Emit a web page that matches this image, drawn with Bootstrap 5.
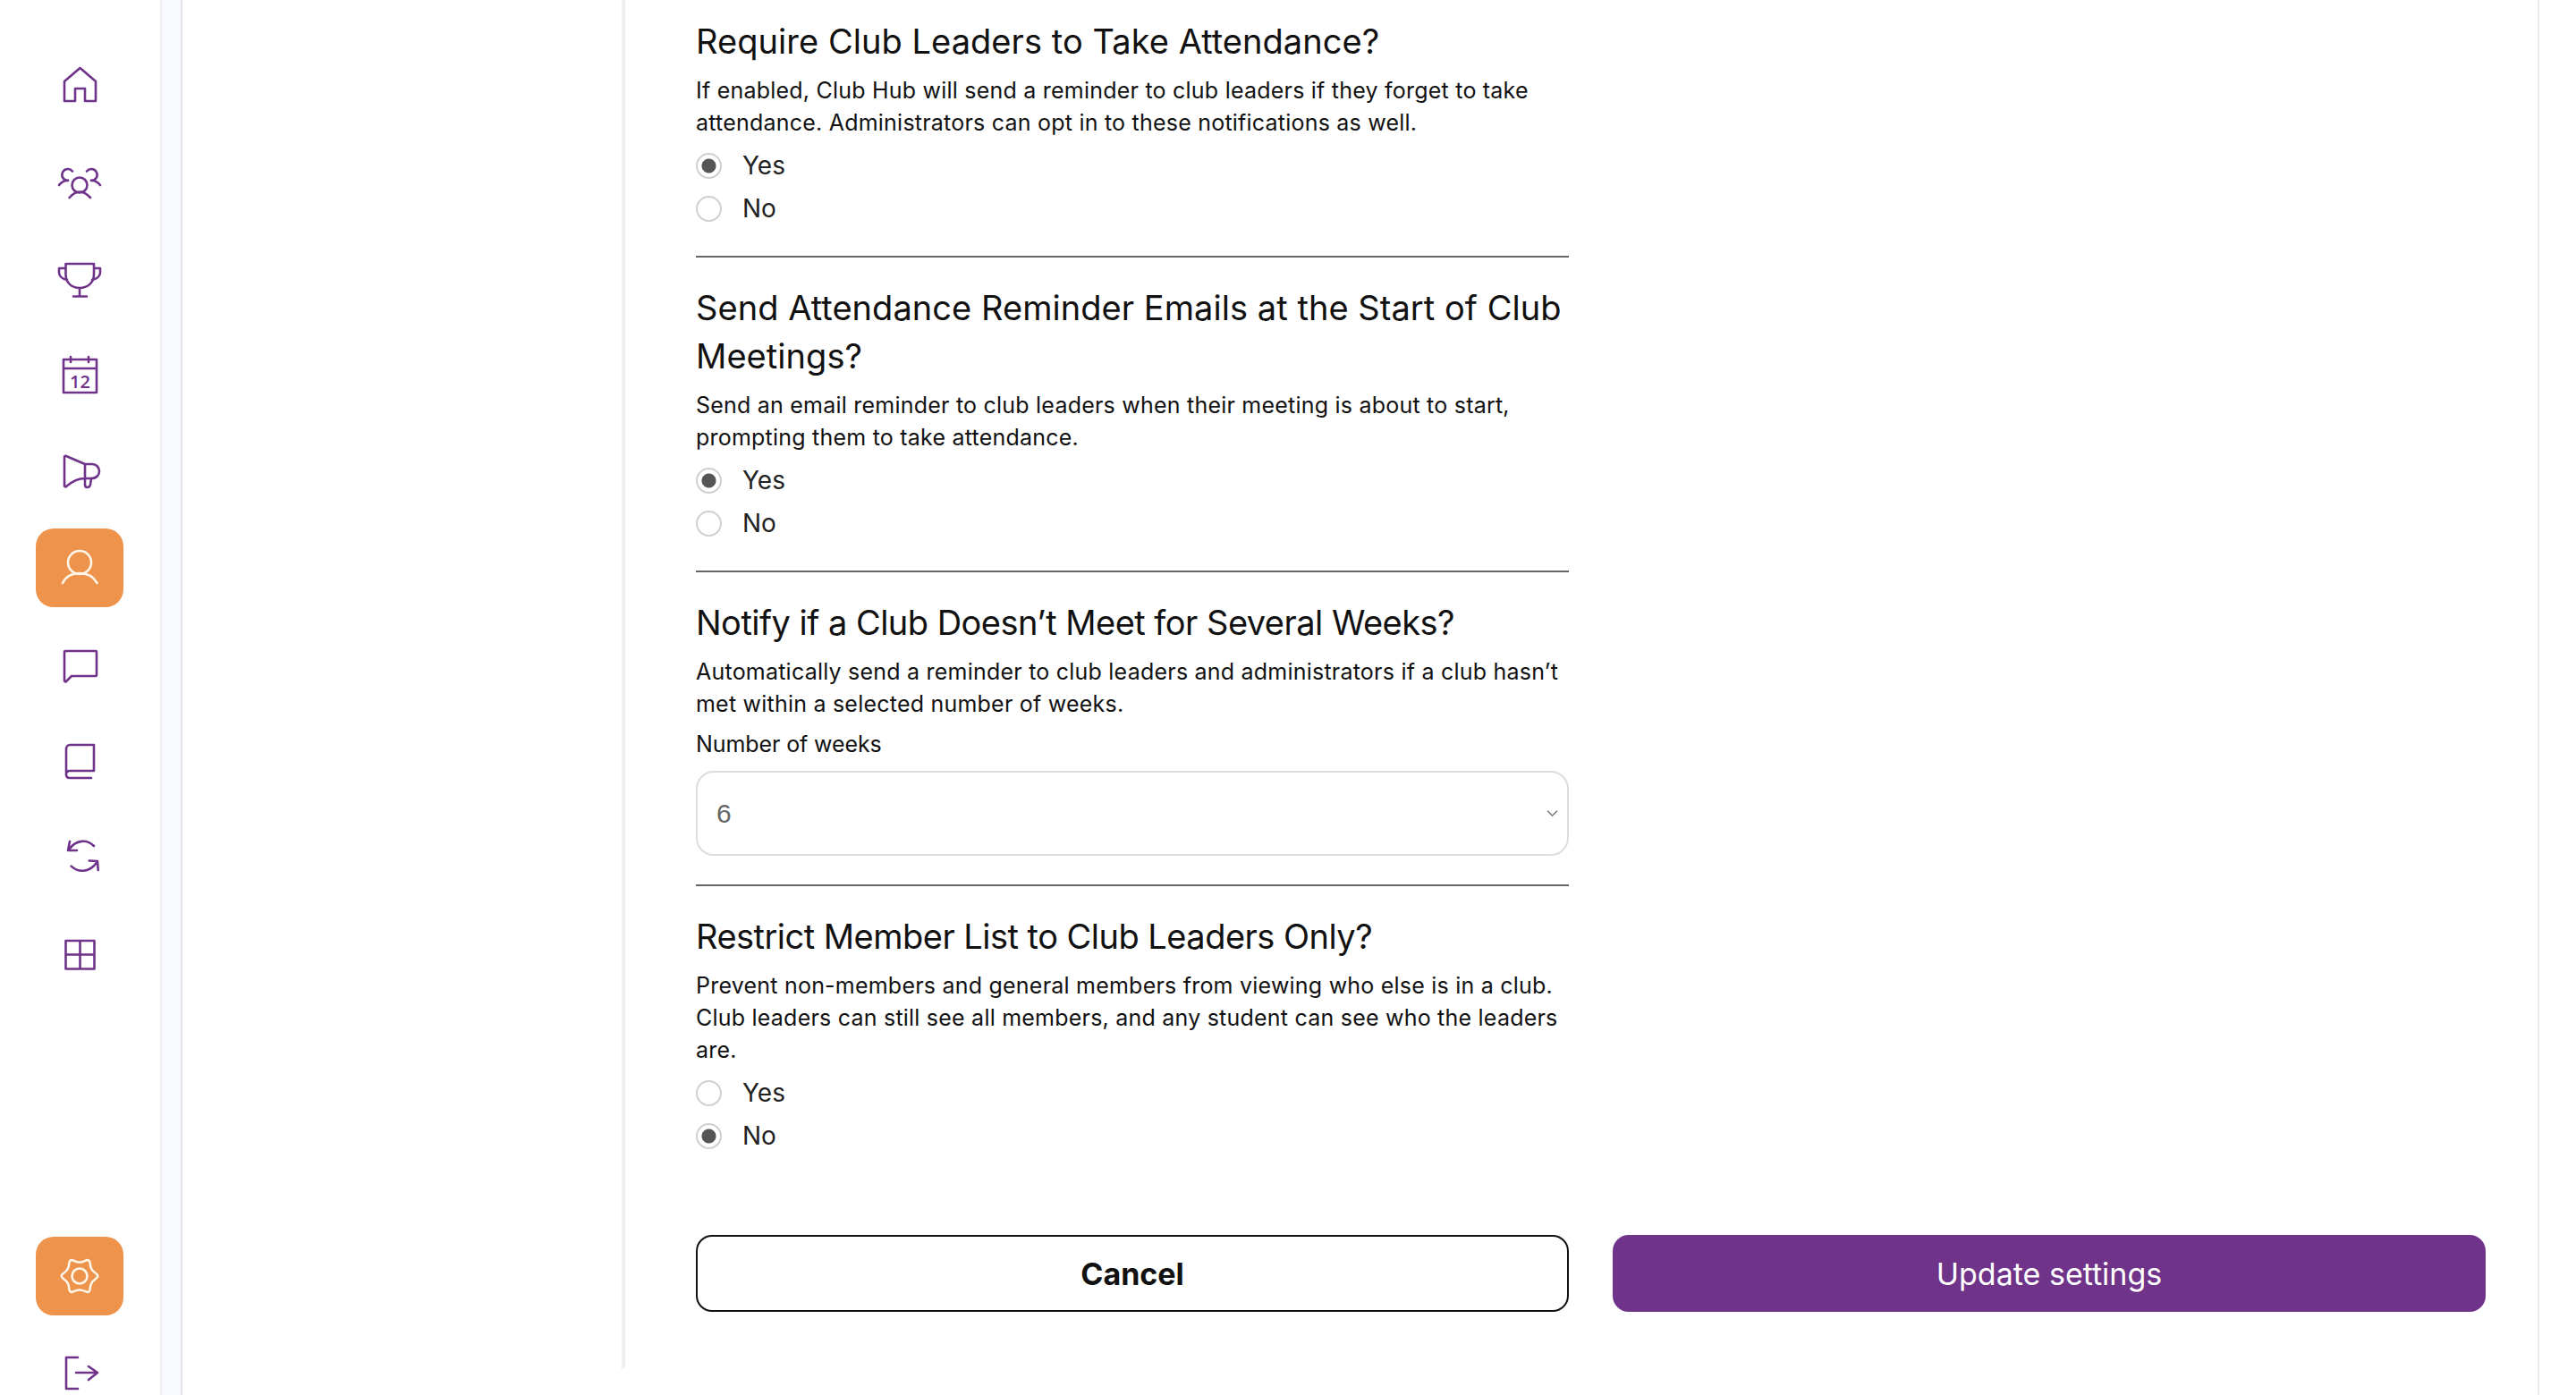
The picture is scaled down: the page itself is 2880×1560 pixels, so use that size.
<!DOCTYPE html>
<html lang="en">
<head>
    <meta charset="UTF-8">
    <meta name="viewport" content="width=device-width, initial-scale=1.0">
    <title>Club Hub settings</title>
    <link href="https://cdn.jsdelivr.net/npm/bootstrap@5.3.0/dist/css/bootstrap.min.css" rel="stylesheet">
    <style>
        html, body { height: 100%; overflow: hidden; background: #fff; }
        body { font-family: Inter, "Noto Sans", sans-serif; color: #111; }
        .app-shell { height: 1560px; }
        .side-rail { width: 179px; padding-top: 51px; overflow: hidden; }
        .rail-item { width: 98px; height: 88px; margin: 0 0 20px 40px; border-radius: 20px; }
        .rail-item svg { width: 56px; height: 44px; fill: none; stroke: #6f338a; stroke-width: 2.6; stroke-linecap: round; stroke-linejoin: round; }
        .rail-item text { fill: #6f338a; stroke: none; font-family: "Open Sans", sans-serif; font-size: 20px; font-weight: 600; }
        .rail-item.is-active { background: #ee934b; }
        .rail-item.is-active svg { stroke: #fff6ea; }
        .rail-bottom { margin-top: 272px; }
        .rail-bottom .rail-item { margin-bottom: 19px; }
        .rail-strip { width: 25px; background: #f9faff; border-left: 2px solid #eef0f6; border-right: 2px solid #dfe1e8; }
        .sub-panel { width: 495px; height: 1530px; border-right: 4px solid #f0f0f0; }
        .page-main { width: 2140px; padding: 19px 60px 0 79px; border-right: 2px solid #eee; }
        .form-col { width: 976px; }
        .set-title { font-size: 38px; line-height: 54px; font-weight: 400; letter-spacing: .05px; margin: 0 0 10px; white-space: nowrap; }
        .set-title-tight { letter-spacing: -.52px; }
        .set-help { font-size: 25px; line-height: 36px; letter-spacing: .22px; margin: 0; white-space: nowrap; }
        .set-radios { margin-top: 6px; }
        .set-radio { display: flex; align-items: center; height: 48px; margin: 0; padding: 0; }
        .set-radio .form-check-input { width: 29px; height: 29px; margin: 0 23px 0 0; border: 2px solid #d0d0d0; float: none; }
        .set-radio .form-check-input:checked { background-color: #fff; background-image: radial-gradient(circle, #555 0 7.5px, transparent 8.5px); border-color: #d0d0d0; }
        .set-radio .form-check-label { font-size: 28px; color: #222; }
        .set-rule { height: 2px; background: #666; border: 0; opacity: 1; margin: 29px 0 29px; }
        .set-label { font-size: 25px; line-height: 36px; letter-spacing: -.1px; margin: 9px 0 12px; display: block; }
        .set-select { height: 95px; border: 2px solid #ddd; border-radius: 20px; padding-left: 21px; font-family: "Liberation Sans", sans-serif; font-size: 30px; color: #666;
            background-image: url("data:image/svg+xml,%3csvg xmlns='http://www.w3.org/2000/svg' viewBox='0 0 12 8'%3e%3cpath fill='none' stroke='%23777' stroke-width='1.4' d='M1 1.500l5 5 5-5'/%3e%3c/svg%3e");
            background-size: 13px 9px; background-position: right 10px center; }
        .set-select + .set-rule { margin-top: 32px; }
        .form-actions { gap: 49px; margin-top: 87px; }
        .act-btn { width: 976px; height: 86px; border-radius: 18px; font-size: 34px; }
        .act-cancel { border: 2px solid #111; background: #fff; color: #111; font-weight: 700; }
        .act-save { border: 2px solid #6f338a; background: #6f338a; color: #fff; font-weight: 400; }
    </style>
</head>
<body>
    <div class="app-shell d-flex">
        <nav class="side-rail flex-shrink-0">
            <div class="rail-item d-flex align-items-center justify-content-center">
                <svg viewBox="0 0 56 44"><path d="M11 40V18L28.500 3 46 18V40H34V26H23V40Z"/></svg>
            </div>
            <div class="rail-item d-flex align-items-center justify-content-center">
                <svg viewBox="0 -1 56 44"><circle cx="28" cy="25" r="8.500"/><path d="M16.600 39Q28 26 40 39M20 9.500A6.500 6.500 0 1 0 15 20M5 25Q9 20 15 19.500M36 9.500A6.500 6.500 0 1 1 41 20M51 25Q47 20 41 19.500"/></svg>
            </div>
            <div class="rail-item d-flex align-items-center justify-content-center">
                <svg viewBox="0 -1 56 44"><path d="M12.500 5H44V17C44 26 37 32 28 32S12.500 26 12.500 17ZM28 32V41M21 41.500H36M12.500 10H5V15C5 19 9 22 14 23M44 10H51V15C51 19 47 22 42 23"/></svg>
            </div>
            <div class="rail-item d-flex align-items-center justify-content-center">
                <svg viewBox="0 0 56 44"><path d="M10 5H47V42H10ZM10 15H47M18 2V8M38 2V8"/><text x="28.500" y="37" text-anchor="middle">12</text></svg>
            </div>
            <div class="rail-item d-flex align-items-center justify-content-center">
                <svg viewBox="0 0 56 44"><path d="M11 6C11 5 12 4.500 13 5L34 14H42C47 14 50 18 50 22C50 26 47 30 41 30H34C27 30 20 33 13 39C12 40 11 39 11 38ZM34 14V37C34 41 39 41 40 37L41 30"/></svg>
            </div>
            <div class="rail-item is-active d-flex align-items-center justify-content-center">
                <svg viewBox="0 0 56 44"><circle cx="28" cy="16" r="13"/><path d="M9 39C13 31 20 28 28 28S43 31 47.500 39"/></svg>
            </div>
            <div class="rail-item d-flex align-items-center justify-content-center">
                <svg viewBox="0 -1 56 44"><path d="M11 7A1 1 0 0 1 12 6H46A1 1 0 0 1 47 7V33A1 1 0 0 1 46 34H19L13 40C12 41 11 40 11 39Z"/></svg>
            </div>
            <div class="rail-item d-flex align-items-center justify-content-center">
                <svg viewBox="0 0 56 44"><path d="M13 38V9C13 6 15 4 17 4H44V33H17C14 33 13 35 13 37S14 41 17 41H41"/></svg>
            </div>
            <div class="rail-item d-flex align-items-center justify-content-center">
                <svg viewBox="0 1 56 44"><path d="M44 10C36 2 24 3 16 14M17 5L15 15L25 15M18.600 32.600C28 41 40 39 47.500 28M38.700 26.500L48 27L48.700 37"/></svg>
            </div>
            <div class="rail-item d-flex align-items-center justify-content-center">
                <svg viewBox="0 1 56 44"><path d="M12.500 8H44.500V39.500H12.500ZM28.500 8V39.500M12.500 23.500H44.500"/></svg>
            </div>
            <div class="rail-bottom">
                <div class="rail-item is-active d-flex align-items-center justify-content-center">
                    <svg viewBox="0 0 56 44"><g transform="translate(28 22)"><path d="M17.560 -3.500Q23 0 17.560 3.500Q12.120 7 11.810 13.460Q11.500 19.920 5.750 16.960Q0 14 -5.750 16.960Q-11.500 19.920 -11.810 13.460Q-12.120 7 -17.560 3.500Q-23 0 -17.560 -3.500Q-12.120 -7 -11.810 -13.460Q-11.500 -19.920 -5.750 -16.960Q0 -14 5.750 -16.960Q11.500 -19.920 11.810 -13.460Q12.120 -7 17.560 -3.500Z"/><circle r="8.500"/></g></svg>
                </div>
                <div class="rail-item d-flex align-items-center justify-content-center">
                    <svg viewBox="0 0 56 44"><path d="M26 6H13V41H26M24 23H48M38 16L48 23L38 31"/></svg>
                </div>
            </div>
        </nav>
        <div class="rail-strip flex-shrink-0"></div>
        <aside class="sub-panel flex-shrink-0"></aside>
        <main class="page-main flex-shrink-0">
            <div class="form-col">
                <h5 class="set-title">Require Club Leaders to Take Attendance?</h5>
                <p class="set-help">If enabled, Club Hub will send a reminder to club leaders if they forget to take<br>attendance. Administrators can opt in to these notifications as well.</p>
                <div class="set-radios">
                    <div class="form-check set-radio"><input class="form-check-input" type="radio" name="attend" id="attendYes" checked><label class="form-check-label" for="attendYes">Yes</label></div>
                    <div class="form-check set-radio"><input class="form-check-input" type="radio" name="attend" id="attendNo"><label class="form-check-label" for="attendNo">No</label></div>
                </div>
                <hr class="set-rule">

                <h5 class="set-title">Send Attendance Reminder Emails at the Start of Club<br>Meetings?</h5>
                <p class="set-help">Send an email reminder to club leaders when their meeting is about to start,<br>prompting them to take attendance.</p>
                <div class="set-radios">
                    <div class="form-check set-radio"><input class="form-check-input" type="radio" name="remind" id="remindYes" checked><label class="form-check-label" for="remindYes">Yes</label></div>
                    <div class="form-check set-radio"><input class="form-check-input" type="radio" name="remind" id="remindNo"><label class="form-check-label" for="remindNo">No</label></div>
                </div>
                <hr class="set-rule">

                <h5 class="set-title set-title-tight">Notify if a Club Doesn’t Meet for Several Weeks?</h5>
                <p class="set-help">Automatically send a reminder to club leaders and administrators if a club hasn’t<br>met within a selected number of weeks.</p>
                <label class="set-label" for="weeks">Number of weeks</label>
                <select class="form-select set-select" id="weeks">
                    <option>6</option>
                </select>
                <hr class="set-rule">

                <h5 class="set-title set-title-tight">Restrict Member List to Club Leaders Only?</h5>
                <p class="set-help">Prevent non-members and general members from viewing who else is in a club.<br>Club leaders can still see all members, and any student can see who the leaders<br>are.</p>
                <div class="set-radios">
                    <div class="form-check set-radio"><input class="form-check-input" type="radio" name="restrict" id="restrictYes"><label class="form-check-label" for="restrictYes">Yes</label></div>
                    <div class="form-check set-radio"><input class="form-check-input" type="radio" name="restrict" id="restrictNo" checked><label class="form-check-label" for="restrictNo">No</label></div>
                </div>
            </div>
            <div class="form-actions d-flex">
                <button type="button" class="btn act-btn act-cancel flex-shrink-0">Cancel</button>
                <button type="button" class="btn act-btn act-save flex-shrink-0">Update settings</button>
            </div>
        </main>
    </div>
    <script src="https://cdn.jsdelivr.net/npm/bootstrap@5.3.0/dist/js/bootstrap.bundle.min.js"></script>
</body>
</html>
